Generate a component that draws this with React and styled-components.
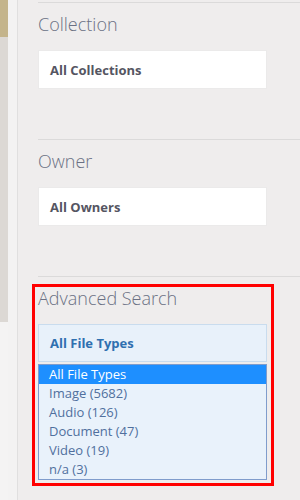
import React from "react";
import styled, { createGlobalStyle } from "styled-components";

const Global = createGlobalStyle`
  html, body { margin: 0; padding: 0; }
  body {
    background: #efeded;
    font-family: "Open Sans", "Liberation Sans", sans-serif;
    width: 300px;
    height: 500px;
    overflow: hidden;
  }
`;

const Page = styled.div`
  display: flex;
  height: 500px;
`;

const Strip = styled.div`
  width: 8px;
  flex: none;
  display: flex;
  flex-direction: column;
`;

const StripPart = styled.div`
  height: ${(p) => (p.$h ? `${p.$h}px` : "auto")};
  flex: ${(p) => (p.$h ? "none" : "1")};
  background: ${(p) => p.$bg};
`;

const Gutter = styled.div`
  width: 9px;
  flex: none;
  background: #f3f2f2;
  border-right: 1px solid #e0dfdf;
`;

const Main = styled.div`
  flex: 1;
  background: #efeded;
  padding-left: 20px;
  padding-top: 2px;
  display: flex;
  flex-direction: column;
  overflow: hidden;
`;

const Section = styled.section`
  flex: none;
  border-top: 1px solid #dbdada;
  padding-top: ${(p) => (p.$flush ? 0 : 9)}px;
  height: ${(p) => p.$h}px;
  box-sizing: border-box;
`;

const Heading = styled.h2`
  margin: 0 0 14px;
  font-size: 18px;
  line-height: 24px;
  font-weight: 300;
  color: #6b7184;
  letter-spacing: 0;
`;

const Box = styled.div`
  width: 229px;
  height: 39px;
  box-sizing: border-box;
  background: #ffffff;
  border: 1px solid #ebeaea;
  padding-left: 11px;
  display: flex;
  align-items: center;
  font-size: 13px;
  font-weight: 700;
  color: #555562;
`;

const Highlight = styled.div`
  margin-top: 7px;
  margin-left: -6px;
  width: 242px;
  height: 202px;
  box-sizing: border-box;
  border: 3px solid #ff0000;
  padding: 0 4px 0 3px;
`;

const AdvHeading = styled(Heading)`
  line-height: 22px;
  margin: 0 0 15px;
`;

const SelectButton = styled(Box)`
  height: 38px;
  background: #e8f1fa;
  border: 1px solid #c9dcee;
  color: #2f70b0;
  margin-bottom: 2px;
`;

const ListBox = styled.div`
  width: 229px;
  box-sizing: border-box;
  background: #e9f2fb;
  border: 1px solid #7f9ccc;
`;

const Option = styled.div`
  height: 19px;
  line-height: 19px;
  padding-left: 10px;
  font-size: 13px;
  color: ${(p) => (p.$selected ? "#ffffff" : "#50709e")};
  background: ${(p) => (p.$selected ? "#1e8fff" : "transparent")};
  white-space: nowrap;
`;

const options = [
  "All File Types",
  "Image (5682)",
  "Audio (126)",
  "Document (47)",
  "Video (19)",
  "n/a (3)",
];

export default function App() {
  return (
    <>
      <Global />
      <Page>
        <Strip>
          <StripPart $h={37} $bg="#c4b48b" />
          <StripPart $h={285} $bg="#dcd8d4" />
          <StripPart $bg="#f4f3f3" />
        </Strip>
        <Gutter />
        <Main>
          <Section $h={137}>
            <Heading>Collection</Heading>
            <Box>All Collections</Box>
          </Section>
          <Section $h={137}>
            <Heading>Owner</Heading>
            <Box>All Owners</Box>
          </Section>
          <Section $h={230} $flush>
            <Highlight>
              <AdvHeading>Advanced Search</AdvHeading>
              <SelectButton>All File Types</SelectButton>
              <ListBox>
                {options.map((o, i) => (
                  <Option key={o} $selected={i === 0}>
                    {o}
                  </Option>
                ))}
              </ListBox>
            </Highlight>
          </Section>
        </Main>
      </Page>
    </>
  );
}
